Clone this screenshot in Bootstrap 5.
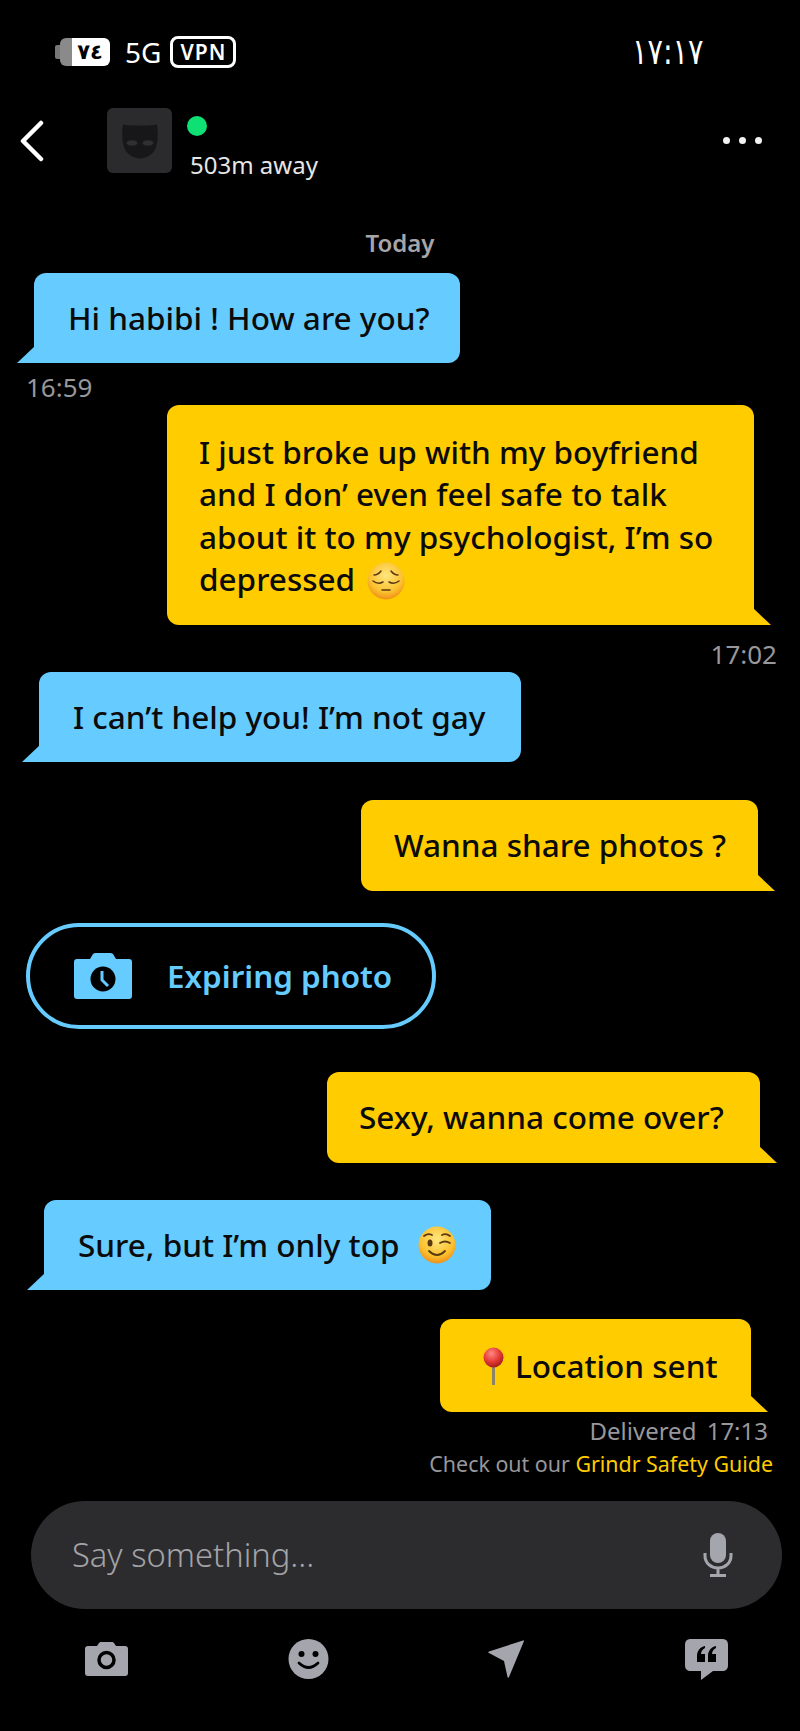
<!DOCTYPE html>
<html lang="en">
<head>
    <meta charset="UTF-8">
    <meta name="viewport" content="width=device-width, initial-scale=1.0">
    <title>Chat</title>
    <link href="https://cdn.jsdelivr.net/npm/bootstrap@5.3.0/dist/css/bootstrap.min.css" rel="stylesheet">
    <style>
        body {
            background-color: #000;
            font-family: "Noto Sans", sans-serif;
            color: #fff;
        }
        .phone { width: 800px; height: 1731px; overflow: hidden; }

        /* status bar */
        .status-bar { height: 108px; padding: 0 96px 4px 55px; }
        .batt-nub { width: 5px; height: 14px; background: #777; border-radius: 2px 0 0 2px; }
        .batt-body {
            width: 50px; height: 28px; border-radius: 6px; overflow: hidden;
            background: linear-gradient(90deg, #8a8a8a 12px, #fff 12px);
            color: #000; font: 700 21px/28px "DejaVu Sans", sans-serif; text-align: center;
            padding-left: 10px;
        }
        .net-label { font-size: 28px; line-height: 1; margin-left: 15px; margin-right: 9px; }
        .vpn-box {
            width: 66px; height: 32px; border: 3px solid #fff; border-radius: 8px;
            font: 600 21px/26px "Noto Sans", sans-serif; letter-spacing: 1px; text-align: center;
        }
        .clock { font: 400 32px/1 "DejaVu Sans", sans-serif; transform: scale(.9, 1.12); transform-origin: right center; }

        /* chat header */
        .chat-head { height: 65px; padding: 0 38px 0 20px; }
        .avatar-box { width: 65px; height: 65px; background: #2b2b2d; border-radius: 6px; margin-left: 63px; }
        .online-dot { width: 20px; height: 20px; flex: none; border-radius: 50%; background: #0ee074; margin: 8px 0 0 1px; }
        .head-info { margin-left: 14px; }
        .dist-text { font-size: 24px; line-height: 30px; color: #e6e6e6; margin: 14px 0 0 4px; }
        .dots-wrap { gap: 9px; }
        .dots-wrap span { width: 7px; height: 7px; border-radius: 50%; background: #f2f2f2; }

        .day-label { font-size: 24px; line-height: 30px; font-weight: 600; color: #a5a5aa; margin-top: 55px; }
        .msg-time { font-size: 26px; line-height: 30px; color: #97979c; }

        /* bubbles */
        .chat-bubble {
            position: relative; color: #0b0b0b; font-size: 31.5px; font-weight: 500; line-height: 42px;
            padding: 24px 0 24px 34px; white-space: nowrap; border-radius: 12px; height: 90px;
        }
        .chat-bubble::after { content: ""; position: absolute; bottom: 0; width: 18px; height: 17px; }
        .from-them { background: #66ccff; border-bottom-left-radius: 0; }
        .from-them::after { left: -17px; background: #66ccff; clip-path: polygon(100% 0, 100% 100%, 0 100%); }
        .from-me { background: #ffcc00; border-bottom-right-radius: 0; }
        .from-me::after { right: -17px; background: #ffcc00; clip-path: polygon(0 0, 100% 100%, 0 100%); }

        .b-hi { width: 426px; margin: 15px 0 0 34px; }
        .t-hi { margin: 9px 0 0 26px; }
        .b-long { width: 587px; height: 220px; margin: 3px 46px 0 0; padding: 26px 0 0 32px; line-height: 42.3px; }
        .sad-face { margin-left: 4px; }
        .t-long { margin: 14px 23px 0 0; }
        .b-help { width: 482px; margin: 3px 0 0 39px; padding-left: 34px; }
        .b-share { width: 397px; height: 91px; margin: 38px 42px 0 0; padding-left: 33px; }
        .b-sexy { width: 433px; height: 91px; margin: 43px 40px 0 0; padding-left: 32px; }
        .b-sure { width: 447px; margin: 37px 0 0 44px; padding-left: 34px; }
        .b-loc { width: 311px; height: 93px; margin: 29px 49px 0 0; padding-left: 43px; gap: 11px; }
        .sure-wink { margin-left: 19px; }

        .expire-pill {
            width: 410px; height: 106px; margin: 32px 0 0 26px; border: 4px solid #66ccff; border-radius: 53px;
            color: #66ccff; font-size: 31.4px; font-weight: 600; padding-left: 44px;
        }
        .expire-pill svg { margin-right: 35px; }

        .t-deliv { margin: 4px 32px 0 0; font-size: 24px; word-spacing: 4px; }
        .safety-line { margin: 3px 27px 0 0; font-size: 21.4px; line-height: 30px; color: #97979c; }
        .safety-line span { color: #ffcc00; }

        /* input */
        .say-box {
            width: 751px; height: 108px; margin: 22px 0 0 31px; padding: 0 49px 0 41px;
            background: #2c2c2e; border-radius: 54px;
        }
        .say-text { font-size: 32.7px; color: #a3a3a8; font-weight: 300; }
        .tool-row { height: 40px; margin: 30px 72px 0 85px; }
    </style>
</head>
<body>
    <div class="phone d-flex flex-column">
        <div class="status-bar d-flex align-items-center justify-content-between">
            <div class="d-flex align-items-center">
                <div class="batt-nub"></div>
                <div class="batt-body">٧٤</div>
                <div class="net-label">5G</div>
                <div class="vpn-box">VPN</div>
            </div>
            <div class="clock">١٧:١٧</div>
        </div>

        <div class="chat-head d-flex align-items-center">
            <svg width="24" height="42" viewBox="0 0 24 42"><path d="M21 3 3 21l18 18" fill="none" stroke="#fff" stroke-width="4.5" stroke-linecap="round" stroke-linejoin="round"/></svg>
            <div class="avatar-box d-flex align-items-center justify-content-center">
                <svg width="36" height="36" viewBox="0 0 36 36"><path d="M1 1.500c5 1.500 29 1.500 34 0 1.500 10 1 19-2 25-3 5.500-9 9-15 9S6 32 3 26.500C0 20.500-.500 11.500 1 1.500z" fill="#17171a"/><ellipse cx="10" cy="20" rx="5.500" ry="2.800" fill="#2f2f31"/><ellipse cx="26" cy="20" rx="5.500" ry="2.800" fill="#2f2f31"/></svg>
            </div>
            <div class="head-info d-flex flex-column align-self-start">
                <div class="online-dot"></div>
                <div class="dist-text">503m away</div>
            </div>
            <div class="dots-wrap d-flex ms-auto"><span></span><span></span><span></span></div>
        </div>

        <div class="day-label text-center">Today</div>

        <div class="d-flex justify-content-start"><div class="chat-bubble from-them b-hi">Hi habibi ! How are you?</div></div>
        <div class="msg-time t-hi">16:59</div>

        <div class="d-flex justify-content-end">
            <div class="chat-bubble from-me b-long">I just broke up with my boyfriend<br>and I don’ even feel safe to talk<br>about it to my psychologist, I’m so<br>depressed
                <svg class="sad-face align-text-bottom" width="38" height="38" viewBox="0 0 38 38">
                    <defs><radialGradient id="faceA" cx="50%" cy="35%" r="65%"><stop offset="0" stop-color="#ffe680"/><stop offset=".7" stop-color="#fbc02d"/><stop offset="1" stop-color="#ef8f1a"/></radialGradient></defs>
                    <circle cx="19" cy="19" r="18.500" fill="url(#faceA)"/>
                    <path d="M6 19q5 4 10 1M22 20q5 3 10-1M7 13q4 0 7-4M31 13q-4 0-7-4M15 28h8" fill="none" stroke="#5b3a12" stroke-width="1.500" stroke-linecap="round"/>
                </svg>
            </div>
        </div>
        <div class="msg-time t-long text-end">17:02</div>

        <div class="d-flex justify-content-start"><div class="chat-bubble from-them b-help">I can’t help you! I’m not gay</div></div>

        <div class="d-flex justify-content-end"><div class="chat-bubble from-me b-share">Wanna share photos ?</div></div>

        <div class="d-flex justify-content-start">
            <div class="expire-pill d-flex align-items-center">
                <svg width="58" height="46" viewBox="0 0 58 46"><path d="M3 6h13l3-5c1-1 2-1 3-1h14c1 0 2 0 3 1l3 5h13c2 0 3 1 3 3v34c0 2-1 3-3 3H3c-2 0-3-1-3-3V9c0-2 1-3 3-3z" fill="#66ccff"/><circle cx="29" cy="26" r="12.500" fill="#000"/><path d="M28 18v9l6 6" fill="none" stroke="#66ccff" stroke-width="3"/></svg>
                <span>Expiring photo</span>
            </div>
        </div>

        <div class="d-flex justify-content-end"><div class="chat-bubble from-me b-sexy">Sexy, wanna come over?</div></div>

        <div class="d-flex justify-content-start">
            <div class="chat-bubble from-them b-sure d-flex align-items-center">
                <span>Sure, but I’m only top</span>
                <svg class="sure-wink" width="38" height="38" viewBox="0 0 38 38">
                    <defs><radialGradient id="faceB" cx="50%" cy="35%" r="65%"><stop offset="0" stop-color="#ffe680"/><stop offset=".7" stop-color="#fbc02d"/><stop offset="1" stop-color="#ef8f1a"/></radialGradient></defs>
                    <circle cx="19" cy="19" r="18.500" fill="url(#faceB)"/>
                    <ellipse cx="12" cy="17" rx="2.500" ry="3.500" fill="#5b3a12"/>
                    <path d="M6 10q4-3 8-1M22 17q5-3 10 0M24 9q4-2 8 1M11 25q8 8 16 0" fill="none" stroke="#5b3a12" stroke-width="1.800" stroke-linecap="round"/>
                </svg>
            </div>
        </div>

        <div class="d-flex justify-content-end">
            <div class="chat-bubble from-me b-loc d-flex align-items-center">
                <svg width="21" height="38" viewBox="0 0 21 38">
                    <defs><radialGradient id="pinHead" cx="40%" cy="30%" r="70%"><stop offset="0" stop-color="#ff8a80"/><stop offset=".6" stop-color="#e53935"/><stop offset="1" stop-color="#a51c1c"/></radialGradient></defs>
                    <rect x="9" y="16" width="3" height="22" fill="#8d8468"/>
                    <circle cx="10.500" cy="10.500" r="10" fill="url(#pinHead)"/>
                </svg>
                <span>Location sent</span>
            </div>
        </div>

        <div class="msg-time t-deliv text-end">Delivered 17:13</div>
        <div class="safety-line text-end">Check out our <span>Grindr Safety Guide</span></div>

        <div class="say-box d-flex align-items-center justify-content-between">
            <span class="say-text">Say something...</span>
            <svg width="30" height="44" viewBox="0 0 30 44"><rect x="7" y="0" width="16" height="30" rx="8" fill="#a5a5ae"/><path d="M2 20v3c0 7 6 12 13 12s13-5 13-12v-3M15 35v6M7 42.500h16" fill="none" stroke="#a5a5ae" stroke-width="3"/></svg>
        </div>

        <div class="tool-row d-flex align-items-center justify-content-between">
            <svg width="43" height="34" viewBox="0 0 43 34"><path d="M3 4h9l2-3c1-1 1-1 2-1h11c1 0 1 0 2 1l2 3h9c2 0 3 1 3 3v24c0 2-1 3-3 3H3c-2 0-3-1-3-3V7c0-2 1-3 3-3z" fill="#a5a5ae"/><circle cx="21.500" cy="18" r="7.500" fill="none" stroke="#000" stroke-width="3.500"/></svg>
            <svg width="41" height="40" viewBox="0 0 41 40"><circle cx="20.500" cy="20" r="20" fill="#a5a5ae"/><circle cx="13.500" cy="15" r="3" fill="#000"/><circle cx="27.500" cy="15" r="3" fill="#000"/><path d="M11 24q9.500 9 19 0" fill="none" stroke="#000" stroke-width="2.800" stroke-linecap="round"/></svg>
            <svg width="37" height="38" viewBox="0 0 37 38"><path d="M36 1 21 37c-.500 1-1 1-1.500 0L16 21 1 13c-1-.500-1-1 0-1.500L35 .500c1-.300 1.300 0 1 .500z" fill="#a5a5ae"/></svg>
            <svg width="43" height="41" viewBox="0 0 43 41"><path d="M6 0h31c4 0 6 2 6 6v20c0 4-2 6-6 6H28L16 41v-9H6c-4 0-6-2-6-6V6c0-4 2-6 6-6z" fill="#a5a5ae"/><path d="M20 7c-5 1-8 5-8 10v6h8v-8h-4c0-3 2-5 4-6zM31 7c-5 1-8 5-8 10v6h8v-8h-4c0-3 2-5 4-6z" fill="#000"/></svg>
        </div>
    </div>
    <script src="https://cdn.jsdelivr.net/npm/bootstrap@5.3.0/dist/js/bootstrap.bundle.min.js"></script>
</body>
</html>
